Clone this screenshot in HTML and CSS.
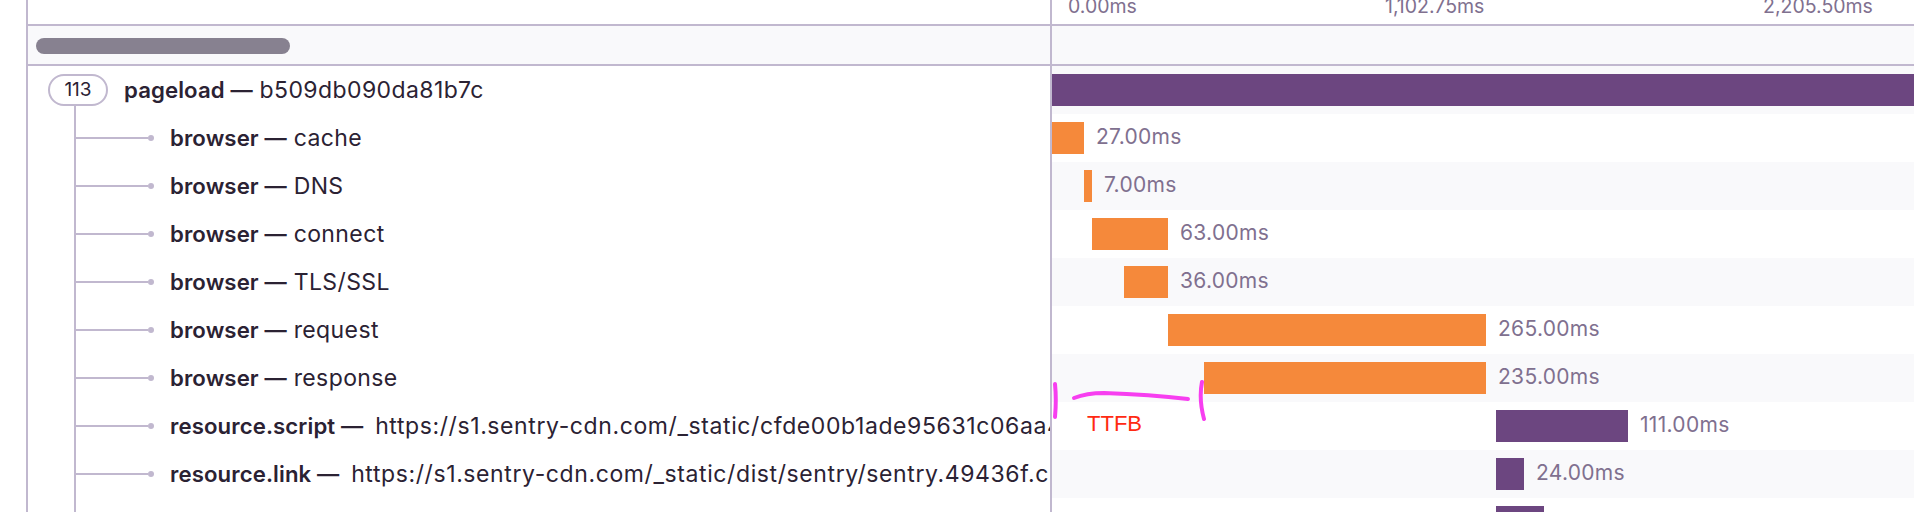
FILE: index.html
```html
<!DOCTYPE html>
<html lang="en">
<head>
    <meta charset="UTF-8">
    <meta name="viewport" content="width=device-width, initial-scale=1.0">
    <title>Trace waterfall</title>
    <link rel="stylesheet" href="styles.css">
</head>
<body>

<div class="waterfall">
    <!-- Time axis -->
    <div class="axis">
        <div class="side"></div>
        <div class="ticks">
            <span class="tick tick-first">0.00ms</span>
            <span class="tick tick-second">1,102.75ms</span>
            <span class="tick">2,205.50ms</span>
        </div>
    </div>

    <div class="scroller">
        <div class="side"><div class="scroll-thumb"></div></div>
        <div class="track"></div>
    </div>

    <!-- Spans -->
    <div class="row alt">
        <div class="side root-side">
            <span class="count">113</span>
            <span class="name"><b>pageload —</b> b509db090da81b7c</span>
        </div>
        <div class="track"><div class="bar purple full"></div></div>
    </div>
    <div class="row">
        <div class="side">
            <span class="spine"></span><span class="elbow"></span><span class="dot"></span>
            <span class="name"><b>browser —</b> cache</span>
        </div>
        <div class="track"><div class="bar orange" style="width: 32px"></div><span class="time">27.00ms</span></div>
    </div>
    <div class="row alt">
        <div class="side">
            <span class="spine"></span><span class="elbow"></span><span class="dot"></span>
            <span class="name"><b>browser —</b> DNS</span>
        </div>
        <div class="track"><div class="bar orange" style="margin-left: 32px; width: 8px"></div><span class="time">7.00ms</span></div>
    </div>
    <div class="row">
        <div class="side">
            <span class="spine"></span><span class="elbow"></span><span class="dot"></span>
            <span class="name"><b>browser —</b> connect</span>
        </div>
        <div class="track"><div class="bar orange" style="margin-left: 40px; width: 76px"></div><span class="time">63.00ms</span></div>
    </div>
    <div class="row alt">
        <div class="side">
            <span class="spine"></span><span class="elbow"></span><span class="dot"></span>
            <span class="name"><b>browser —</b> TLS/SSL</span>
        </div>
        <div class="track"><div class="bar orange" style="margin-left: 72px; width: 44px"></div><span class="time">36.00ms</span></div>
    </div>
    <div class="row">
        <div class="side">
            <span class="spine"></span><span class="elbow"></span><span class="dot"></span>
            <span class="name"><b>browser —</b> request</span>
        </div>
        <div class="track"><div class="bar orange" style="margin-left: 116px; width: 318px"></div><span class="time">265.00ms</span></div>
    </div>
    <div class="row alt">
        <div class="side">
            <span class="spine"></span><span class="elbow"></span><span class="dot"></span>
            <span class="name"><b>browser —</b> response</span>
        </div>
        <div class="track"><div class="bar orange" style="margin-left: 152px; width: 282px"></div><span class="time">235.00ms</span></div>
    </div>
    <div class="row">
        <div class="side">
            <span class="spine"></span><span class="elbow"></span><span class="dot"></span>
            <span class="name"><b>resource.script —</b> <span class="url">https://s1.sentry-cdn.com/_static/cfde00b1ade95631c06aa4e1c8e2f0a7/sentry/js/ads.js</span></span>
        </div>
        <div class="track"><div class="bar purple" style="margin-left: 444px; width: 132px"></div><span class="time">111.00ms</span></div>
    </div>
    <div class="row alt">
        <div class="side">
            <span class="spine"></span><span class="elbow"></span><span class="dot"></span>
            <span class="name"><b>resource.link —</b> <span class="url">https://s1.sentry-cdn.com/_static/dist/sentry/sentry.49436f.css.map.bundle.min</span></span>
        </div>
        <div class="track"><div class="bar purple" style="margin-left: 444px; width: 28px"></div><span class="time">24.00ms</span></div>
    </div>
    <div class="row row-cut">
        <div class="side">
            <span class="spine"></span><span class="elbow"></span><span class="dot"></span>
            <span class="name"><b>resource.script —</b> <span class="url">https://s1.sentry-cdn.com/_static/dist/sentry/vendor.js</span></span>
        </div>
        <div class="track"><div class="bar purple" style="margin-left: 444px; width: 48px"></div><span class="time">40.00ms</span></div>
    </div>

    <!-- Hand drawn note on top of the screenshot -->
    <svg class="marks" width="160" height="44" viewBox="0 0 160 44">
        <path d="M3 4 C4 14 4 26 3 37"/>
        <path d="M22 18 C32 14 42 13 52 13 C80 14 110 16 136 19"/>
        <path d="M150 2 C148 12 148 24 152 39"/>
    </svg>
    <span class="ttfb">TTFB</span>
</div>

</body>
</html>
```

FILE: styles.css
```css
html, body {
    margin: 0;
    padding: 0;
    height: 512px;
    overflow: hidden;
    background-color: #fff;
}

body {
    font-family: Inter, "Noto Sans", sans-serif;
    font-size: 23px;
    letter-spacing: 0.4px;
    color: #2b2233;
}

.waterfall {
    position: relative;
    margin-left: 26px;
    border-left: 2px solid #c1b8cf;
}

.axis, .scroller, .row {
    display: flex;
}

.side {
    width: 1022px;
    flex-shrink: 0;
    border-right: 2px solid #c1b8cf;
    box-sizing: content-box;
}

.axis {
    height: 24px;
    border-bottom: 2px solid #c1b8cf;
}

.ticks {
    display: flex;
    flex: 1;
    height: 24px;
    align-items: flex-end;
    padding-left: 16px;
    color: #80708f;
    font-size: 19.5px;
    letter-spacing: 0;
    line-height: 18px;
    overflow: hidden;
}

.tick {
    padding-bottom: 9px;
    white-space: nowrap;
}

.tick-first {
    width: 317px;
}

.tick-second {
    width: 378px;
}

.scroller {
    height: 38px;
    border-bottom: 2px solid #c1b8cf;
    background-color: #f9f9fb;
}

.scroll-thumb {
    width: 254px;
    height: 16px;
    margin: 12px 0 0 8px;
    border-radius: 8px;
    background-color: #878190;
}

.row {
    height: 48px;
}

.row.alt {
    background-color: #f9f9fb;
}

.row .side {
    display: flex;
    align-items: center;
    background-color: #fff;
    overflow: hidden;
    white-space: nowrap;
}

.count {
    position: relative;
    box-sizing: border-box;
    width: 60px;
    height: 32px;
    margin-left: 20px;
    border: 2px solid #c1b8cf;
    border-radius: 16px;
    text-align: center;
    font-size: 19px;
    letter-spacing: 0;
    line-height: 28px;
    flex-shrink: 0;
}

/* start of the tree line under the pill */
.count::after {
    content: "";
    position: absolute;
    top: 30px;
    left: 24px;
    width: 2px;
    height: 10px;
    background-color: #c1b8cf;
}

.row .root-side {
    overflow: visible;
}

.root-side .name {
    margin-left: 16px;
}

.spine {
    align-self: stretch;
    width: 2px;
    margin-left: 46px;
    background-color: #c1b8cf;
    flex-shrink: 0;
}

.elbow {
    width: 72px;
    height: 2px;
    background-color: #c1b8cf;
    flex-shrink: 0;
}

.dot {
    width: 6px;
    height: 6px;
    border-radius: 50%;
    background-color: #c1b8cf;
    flex-shrink: 0;
}

.name {
    margin-left: 16px;
    padding-bottom: 1px;
}

.name b {
    font-size: 22.2px;
    font-weight: 600;
    letter-spacing: 0.1px;
}

.url {
    margin-left: 5px;
    letter-spacing: 0.6px;
}

.row-cut .name {
    padding-top: 4px;
}

.track {
    display: flex;
    flex: 1;
    align-items: center;
    min-width: 0;
}

.bar {
    height: 32px;
    flex-shrink: 0;
}

.bar.full {
    width: 100%;
}

.orange {
    background-color: #f5893b;
}

.purple {
    background-color: #6c4680;
}

.time {
    margin-left: 12px;
    padding-bottom: 4px;
    color: #80708f;
    font-size: 21px;
    letter-spacing: 0.3px;
    white-space: nowrap;
}

.marks {
    position: absolute;
    left: 1024px;
    top: 380px;
}

.marks path {
    fill: none;
    stroke: #f73ef0;
    stroke-width: 4px;
    stroke-linecap: round;
}

.ttfb {
    position: absolute;
    left: 1059px;
    top: 411px;
    color: #ff2a12;
    font-family: "Liberation Sans", Arial, sans-serif;
    font-size: 22px;
    letter-spacing: 0;
    line-height: 26px;
}
```
